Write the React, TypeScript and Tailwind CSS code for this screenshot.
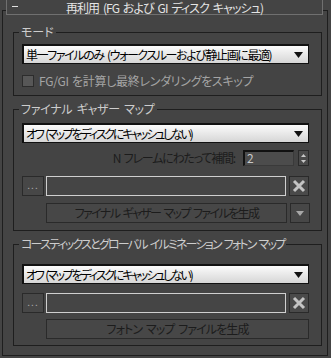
import React from "react"

const font = { fontFamily: '"Noto Sans CJK JP", "Liberation Sans", sans-serif', fontFeatureSettings: '"palt"' }

function Dropdown({ label, tracking }: { label: string; tracking: string }) {
  return (
    <div className="ml-[8px] w-[287px] h-[20px] flex items-center justify-between border border-[#111] border-l-2 border-t-2 bg-gradient-to-b from-[#fbfbfb] to-[#d6d6d6] pl-[2px] pr-[5px] text-[12px] leading-none text-black">
      <span className={`whitespace-nowrap [word-spacing:2px] ${tracking}`}>{label}</span>
      <svg width="9" height="6" viewBox="0 0 9 6"><path d="M0 0h9L4.5 6z" fill="#111" /></svg>
    </div>
  )
}

function BrowseRow() {
  return (
    <div className="ml-[8px] w-[287px] h-[20px] flex">
      <div className="w-[22px] h-[20px] flex items-end justify-center pb-[5px] bg-[#474747] border border-[#2a2a2a] text-[#aaaaaa] text-[10px] leading-none tracking-[1px]">...</div>
      <div className="ml-[2px] w-[240px] h-[20px] border border-[#cfcfcf] bg-[#454545]" />
      <div className="ml-[3px] w-[20px] h-[20px] flex items-center justify-center bg-[#4a4a4a] border border-[#2a2a2a]">
        <svg width="14" height="14" viewBox="0 0 14 14">
          <path d="M2 2L12 12M12 2L2 12" stroke="#c4c4c4" strokeWidth="3" />
        </svg>
      </div>
    </div>
  )
}

function Group({ title, tracking, height, className, children }: { title: string; tracking: string; height: string; className?: string; children: React.ReactNode }) {
  return (
    <div className={`ml-[10px] w-[309px] border border-[#1e1e1e] ${height} ${className ?? ""}`}>
      <div className={`-mt-[9px] ml-[5px] w-fit px-[2px] bg-[#444444] text-[12px] leading-[16px] text-[#cdcdcd] whitespace-nowrap [word-spacing:2px] ${tracking}`}>{title}</div>
      {children}
    </div>
  )
}

export default function App() {
  return (
    <div className="w-[331px] h-[358px] bg-[#444444] overflow-hidden pt-[10px]" style={font}>
      <div className="ml-[2px] w-[326px] h-[346px] border border-[#1e1e1e]">
        {/* rollout header */}
        <div className="-mt-[11px] ml-[3px] mr-[4px] h-[15px] relative bg-[#444444] border-x border-b border-[#707070] flex items-center">
          <span className="absolute left-[5px] top-[6px] w-[6px] h-[1px] bg-[#e0e0e0]" />
          <span className="w-full pt-[1px] text-center text-[12px] tracking-[-0.9px] [word-spacing:2px] leading-[13px] text-[#e4e4e4] whitespace-nowrap">再利用 (FG および GI ディスク キャッシュ)</span>
        </div>

        <Group title="モード" tracking="tracking-[0px]" height="h-[64px]" className="mt-[17px]">
          <div className="mt-[4px]">
            <Dropdown label="単一ファイルのみ (ウォークスルーおよび静止画に最適)" tracking="tracking-[-1.4px]" />
          </div>
          <div className="mt-[11px] ml-[8px] flex items-center h-[12px]">
            <div className="w-[12px] h-[12px] bg-[#575757] border border-[#2c2c2c]" />
            <span className="ml-[5px] text-[12px] tracking-[-0.3px] [word-spacing:1px] leading-none text-[#a4a4a4] whitespace-nowrap">FG/GI を計算し最終レンダリングをスキップ</span>
          </div>
        </Group>

        <Group title="ファイナル ギャザー マップ" tracking="tracking-[-0.3px]" height="h-[122px]" className="mt-[13px]">
          <div className="mt-[6px]">
            <Dropdown label="オフ (マップをディスクにキャッシュしない)" tracking="tracking-[-2.2px]" />
          </div>
          <div className="mt-[7px] ml-[8px] w-[287px] h-[16px] flex items-center justify-end">
            <span className="text-[12px] tracking-[-1.2px] [word-spacing:2px] leading-none text-[#1c1c1c] whitespace-nowrap">N フレームにわたって補間:</span>
            <div className="ml-[8px] w-[51px] h-[16px] bg-[#4c4c4c] border border-[#3a3a3a] border-l-2 border-t-2 border-l-[#111] border-t-[#111] pl-[2px] text-[12px] leading-[12px] text-[#c8c8c8]">2</div>
            <div className="ml-[4px] w-[11px] h-[16px] flex flex-col items-center justify-center gap-[3px] bg-[#4a4a4a] border border-[#2a2a2a]">
              <svg width="5" height="3" viewBox="0 0 5 3"><path d="M0 3h5L2.5 0z" fill="#c8c8c8" /></svg>
              <svg width="5" height="3" viewBox="0 0 5 3"><path d="M0 0h5L2.5 3z" fill="#c8c8c8" /></svg>
            </div>
          </div>
          <div className="mt-[10px]">
            <BrowseRow />
          </div>
          <div className="mt-[7px] ml-[32px] flex h-[20px]">
            <div className="w-[241px] h-[20px] flex items-center justify-center bg-[#474747] border border-[#2a2a2a] text-[12px] tracking-[-1.6px] [word-spacing:2px] leading-none text-[#1c1c1c] whitespace-nowrap">ファイナル ギャザー マップ ファイルを生成</div>
            <div className="ml-[3px] w-[20px] h-[20px] flex items-center justify-center bg-[#474747] border border-[#2a2a2a]">
              <svg width="8" height="5" viewBox="0 0 8 5"><path d="M0 0h8L4 5z" fill="#a8a8a8" /></svg>
            </div>
          </div>
        </Group>

        <Group title="コースティックスとグローバル イルミネーション フォトン マップ" tracking="tracking-[-1.8px]" height="h-[102px]" className="mt-[13px]">
          <div className="mt-[12px]">
            <Dropdown label="オフ (マップをディスクにキャッシュしない)" tracking="tracking-[-2.2px]" />
          </div>
          <div className="mt-[9px]">
            <BrowseRow />
          </div>
          <div className="mt-[6px] ml-[32px] w-[263px] h-[20px] flex items-center justify-center bg-[#474747] border border-[#2a2a2a] text-[12px] tracking-[-0.9px] [word-spacing:2px] leading-none text-[#1c1c1c] whitespace-nowrap">フォトン マップ ファイルを生成</div>
        </Group>
      </div>
    </div>
  )
}
